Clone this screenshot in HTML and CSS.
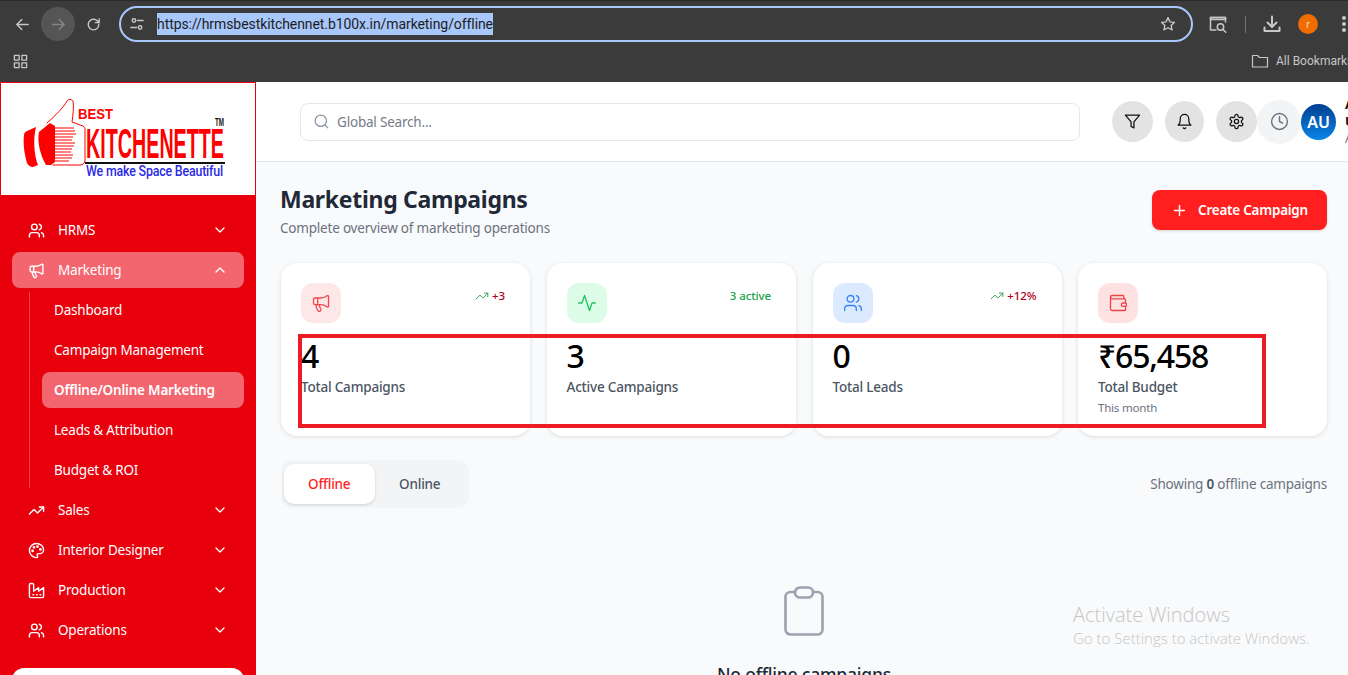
FILE: index.html
```html
<!DOCTYPE html>
<html lang="en">
<head>
    <meta charset="UTF-8">
    <meta name="viewport" content="width=device-width, initial-scale=1.0">
    <title>Marketing Campaigns</title>
    <link rel="stylesheet" href="styles.css">
</head>
<body>
    <svg class="sprites" aria-hidden="true">
        <symbol id="i-users" viewBox="0 0 24 24"><path d="M16 21v-2a4 4 0 0 0-4-4H6a4 4 0 0 0-4 4v2"/><circle cx="9" cy="7" r="4"/><path d="M22 21v-2a4 4 0 0 0-3-3.870"/><path d="M16 3.130a4 4 0 0 1 0 7.750"/></symbol>
        <symbol id="i-megaphone" viewBox="0 0 24 24"><path d="M11 6a13 13 0 0 0 8.400-2.800A1 1 0 0 1 21 4v12a1 1 0 0 1-1.600.8A13 13 0 0 0 11 14H5a2 2 0 0 1-2-2V8a2 2 0 0 1 2-2z"/><path d="M6 14a12 12 0 0 0 2.400 7.200 2 2 0 0 0 3.200-2.400A8 8 0 0 1 10 14"/><path d="M8 6v8"/></symbol>
        <symbol id="i-trend" viewBox="0 0 24 24"><polyline points="22 7 13.500 15.500 8.500 10.500 2 17"/><polyline points="16 7 22 7 22 13"/></symbol>
        <symbol id="i-palette" viewBox="0 0 24 24"><circle cx="13.500" cy="6.500" r="1"/><circle cx="17.500" cy="10.500" r="1"/><circle cx="8.500" cy="7.500" r="1"/><circle cx="6.500" cy="12.500" r="1"/><path d="M12 2C6.500 2 2 6.500 2 12s4.500 10 10 10c.926 0 1.648-.746 1.648-1.688 0-.437-.18-.835-.437-1.125-.29-.289-.438-.652-.438-1.125a1.640 1.640 0 0 1 1.668-1.668h1.996c3.051 0 5.555-2.503 5.555-5.554C21.965 6.012 17.461 2 12 2z"/></symbol>
        <symbol id="i-factory" viewBox="0 0 24 24"><path d="M2 20a2 2 0 0 0 2 2h16a2 2 0 0 0 2-2V8l-7 5V8l-7 5V4a2 2 0 0 0-2-2H4a2 2 0 0 0-2 2Z"/><path d="M17 18h1"/><path d="M12 18h1"/><path d="M7 18h1"/></symbol>
        <symbol id="i-down" viewBox="0 0 24 24"><path d="m6 9 6 6 6-6"/></symbol>
        <symbol id="i-up" viewBox="0 0 24 24"><path d="m18 15-6-6-6 6"/></symbol>
    </svg>

    <header class="browser">
        <div class="toolbar">
            <svg class="tool back" viewBox="0 0 24 24"><path d="M20 12H5m6-7-7 7 7 7"/></svg>
            <span class="fwd-wrap"><svg class="tool fwd" viewBox="0 0 24 24"><path d="M4 12h15m-6-7 7 7-7 7"/></svg></span>
            <svg class="tool reload" viewBox="0 0 24 24"><path d="M19.500 12a7.500 7.500 0 1 1-2.200-5.300L20 9.400M20 4v5.400h-5.400"/></svg>
            <div class="omnibox">
                <svg class="tune" viewBox="0 0 16 16"><circle cx="4.500" cy="4" r="2"/><path d="M8.500 4H15M1 12h6.500"/><circle cx="11.500" cy="12" r="2"/></svg>
                <span class="url">https://hrmsbestkitchennet.b100x.in/marketing/offline</span>
                <svg class="star" viewBox="0 0 24 24"><path d="m12 3.500 2.600 5.600 6.100.7-4.500 4.200 1.200 6L12 17l-5.400 3 1.200-6-4.500-4.200 6.100-.7z"/></svg>
            </div>
            <svg class="tool lens" viewBox="0 0 20 20"><path d="M8 16H2.500V3.500h15V8"/><path d="M2.500 3.500h15v2h-15z"/><circle cx="12.500" cy="13" r="3.200"/><path d="m15 15.500 2.800 2.800"/></svg>
            <span class="divider"></span>
            <svg class="tool save" viewBox="0 0 20 20"><path d="M10 2.500v10M5.500 8.500l4.500 4.500 4.500-4.500M2.500 13.500v3.500h15v-3.500"/></svg>
            <span class="profile">r</span>
            <span class="kebab"></span>
        </div>
        <div class="bookmarks">
            <svg class="apps" viewBox="0 0 16 16"><rect x="1.500" y="1.500" width="5" height="5"/><rect x="9.500" y="1.500" width="5" height="5"/><rect x="1.500" y="9.500" width="5" height="5"/><rect x="9.500" y="9.500" width="5" height="5"/></svg>
            <span class="divider short"></span>
            <svg class="folder" viewBox="0 0 18 16"><path d="M1.500 2.500h5l2 2h8v9.500h-15z"/></svg>
            <span class="all-marks">All Bookmarks</span>
        </div>
    </header>

    <div class="app">
        <aside class="sidebar">
            <div class="logo">
                <svg class="logo-art" viewBox="0 0 226 113">
                    <path class="thumb-line" d="M47 41C56 33 63 26 67 19c1-2 5-2 6 0 1 6 0 14-1 21l11 4c2 1 2 2 2 4v30c0 3-2 5-5 5H53"/>
                    <path class="thumb-fill" d="M39 50l11-9 5 3v36l-4 3h-5c-6-10-9-24-7-33z"/>
                    <path class="thumb-fill" d="M27 49l9-4c-3 12-2 28 2 38l-5 2c-3 0-5-2-6-4-3-10-4-20-3-28 0-2 1-3 3-4z"/>
                    <path class="thumb-lines" d="M55 46h19M55 49h20M55 52h21M55 55h18M55 58h17M55 61h20M55 64h19M55 67h17M55 70h16M55 73h18M55 76h17M55 79h14"/>
                    <text class="logo-best" x="78" y="37" textLength="35" lengthAdjust="spacingAndGlyphs">BEST</text>
                    <text class="logo-name" x="86" y="76" textLength="138" lengthAdjust="spacingAndGlyphs">KITCHENETTE</text>
                    <text class="logo-tm" x="215" y="44" textLength="9" lengthAdjust="spacingAndGlyphs">TM</text>
                    <rect class="logo-rule" x="85" y="80" width="140" height="2"/>
                    <text class="logo-tag" x="86" y="94" textLength="137" lengthAdjust="spacingAndGlyphs">We make Space Beautiful</text>
                </svg>
            </div>
            <nav class="nav">
                <a class="nav-item"><svg class="ico"><use href="#i-users"/></svg><span>HRMS</span><svg class="chev"><use href="#i-down"/></svg></a>
                <a class="nav-item open"><svg class="ico"><use href="#i-megaphone"/></svg><span>Marketing</span><svg class="chev"><use href="#i-up"/></svg></a>
                <div class="subnav">
                    <a class="sub-item">Dashboard</a>
                    <a class="sub-item">Campaign Management</a>
                    <a class="sub-item active">Offline/Online Marketing</a>
                    <a class="sub-item">Leads &amp; Attribution</a>
                    <a class="sub-item">Budget &amp; ROI</a>
                </div>
                <a class="nav-item"><svg class="ico"><use href="#i-trend"/></svg><span>Sales</span><svg class="chev"><use href="#i-down"/></svg></a>
                <a class="nav-item"><svg class="ico"><use href="#i-palette"/></svg><span>Interior Designer</span><svg class="chev"><use href="#i-down"/></svg></a>
                <a class="nav-item"><svg class="ico"><use href="#i-factory"/></svg><span>Production</span><svg class="chev"><use href="#i-down"/></svg></a>
                <a class="nav-item"><svg class="ico"><use href="#i-users"/></svg><span>Operations</span><svg class="chev"><use href="#i-down"/></svg></a>
            </nav>
            <div class="side-foot"></div>
        </aside>

        <div class="content">
            <div class="topbar">
                <div class="search">
                    <svg class="search-ico" viewBox="0 0 24 24"><circle cx="11" cy="11" r="8"/><path d="m21 21-4.300-4.300"/></svg>
                    <span>Global Search...</span>
                </div>
                <div class="top-actions">
                    <span class="round filter"><svg viewBox="0 0 24 24"><polygon points="22 3 2 3 10 12.460 10 19 14 21 14 12.460 22 3"/></svg></span>
                    <span class="round bell"><svg viewBox="0 0 24 24"><path d="M6 8a6 6 0 0 1 12 0c0 7 3 9 3 9H3s3-2 3-9"/><path d="M10.300 21a1.940 1.940 0 0 0 3.400 0"/></svg></span>
                    <span class="round gear"><svg viewBox="0 0 24 24"><path d="M12.220 2h-.44a2 2 0 0 0-2 2v.18a2 2 0 0 1-1 1.730l-.43.25a2 2 0 0 1-2 0l-.15-.08a2 2 0 0 0-2.730.730l-.22.38a2 2 0 0 0 .730 2.730l.15.1a2 2 0 0 1 1 1.720v.51a2 2 0 0 1-1 1.740l-.15.09a2 2 0 0 0-.730 2.730l.22.38a2 2 0 0 0 2.730.730l.15-.08a2 2 0 0 1 2 0l.43.25a2 2 0 0 1 1 1.730V20a2 2 0 0 0 2 2h.44a2 2 0 0 0 2-2v-.18a2 2 0 0 1 1-1.730l.43-.25a2 2 0 0 1 2 0l.15.08a2 2 0 0 0 2.730-.730l.22-.39a2 2 0 0 0-.730-2.730l-.15-.08a2 2 0 0 1-1-1.740v-.5a2 2 0 0 1 1-1.740l.15-.09a2 2 0 0 0 .730-2.730l-.22-.38a2 2 0 0 0-2.730-.730l-.15.08a2 2 0 0 1-2 0l-.43-.25a2 2 0 0 1-1-1.730V4a2 2 0 0 0-2-2z"/><circle cx="12" cy="12" r="3"/></svg></span>
                    <span class="round clock"><svg viewBox="0 0 24 24"><circle cx="12" cy="12" r="10"/><polyline points="12 6 12 12 16 14"/></svg></span>
                    <span class="avatar">AU</span>
                    <div class="who">
                        <b>Admin</b>
                        <b>User</b>
                        <small>Admin</small>
                    </div>
                </div>
            </div>

            <main class="page">
                <div class="page-head">
                    <div>
                        <h1>Marketing Campaigns</h1>
                        <p>Complete overview of marketing operations</p>
                    </div>
                    <button class="create"><svg viewBox="0 0 24 24"><path d="M5 12h14M12 5v14"/></svg>Create Campaign</button>
                </div>

                <section class="cards">
                    <article class="card">
                        <div class="card-top">
                            <span class="card-ico rose"><svg class="ico"><use href="#i-megaphone"/></svg></span>
                            <span class="trend"><svg><use href="#i-trend"/></svg><em>+3</em></span>
                        </div>
                        <div class="value">4</div>
                        <div class="label">Total Campaigns</div>
                    </article>
                    <article class="card">
                        <div class="card-top">
                            <span class="card-ico green"><svg viewBox="0 0 24 24"><path d="M22 12h-4l-3 9L9 3l-3 9H2"/></svg></span>
                            <span class="trend on">3 active</span>
                        </div>
                        <div class="value">3</div>
                        <div class="label">Active Campaigns</div>
                    </article>
                    <article class="card">
                        <div class="card-top">
                            <span class="card-ico blue"><svg class="ico"><use href="#i-users"/></svg></span>
                            <span class="trend"><svg><use href="#i-trend"/></svg><em>+12%</em></span>
                        </div>
                        <div class="value">0</div>
                        <div class="label">Total Leads</div>
                    </article>
                    <article class="card">
                        <div class="card-top">
                            <span class="card-ico red"><svg viewBox="0 0 24 24"><path d="M19 7V4a1 1 0 0 0-1-1H5a2 2 0 0 0 0 4h15a1 1 0 0 1 1 1v4h-3a2 2 0 0 0 0 4h3a1 1 0 0 0 1-1v-2a1 1 0 0 0-1-1"/><path d="M3 5v14a2 2 0 0 0 2 2h15a1 1 0 0 0 1-1v-4"/></svg></span>
                        </div>
                        <div class="value">₹65,458</div>
                        <div class="label">Total Budget</div>
                        <div class="note">This month</div>
                    </article>
                </section>

                <div class="tab-row">
                    <div class="tabs">
                        <button class="tab current">Offline</button>
                        <button class="tab">Online</button>
                    </div>
                    <p class="showing">Showing <b>0</b> offline campaigns</p>
                </div>

                <div class="empty">
                    <svg viewBox="0 0 40 50"><rect x="1.500" y="6" width="37" height="42.500" rx="5"/><rect x="11" y="1.500" width="18" height="10" rx="5" class="clip"/></svg>
                    <h3>No offline campaigns</h3>
                </div>
            </main>
        </div>
    </div>

    <!-- marker drawn on the screenshot -->
    <div class="marker"></div>
    <div class="activate">
        <p>Activate Windows</p>
        <small>Go to Settings to activate Windows.</small>
    </div>
</body>
</html>
```

FILE: styles.css
```css
*{
    box-sizing: border-box;
}
html,body{
    height: 100%;
    overflow: hidden;
}
body{
    margin: 0;
    font-family: "Noto Sans", "Open Sans", sans-serif;
    font-size: 13.5px;
    letter-spacing: -0.2px;
    color: #1f2937;
    background-color: #f9fafb;
}
.sprites{
    display: none;
}
svg{
    fill: none;
    stroke: currentColor;
    stroke-width: 2;
    stroke-linecap: round;
    stroke-linejoin: round;
    flex-shrink: 0;
}

/* browser chrome */
.browser{
    height: 82px;
    background-color: #3b3b3b;
    color: #c7c7c7;
    letter-spacing: 0;
}
.toolbar{
    height: 46px;
    display: flex;
    align-items: center;
    padding: 1px 0 0 14px;
    white-space: nowrap;
    border-top: 1px solid #2a2a2a;
}
.tool{
    width: 17px;
    height: 17px;
}
.fwd-wrap{
    width: 34px;
    height: 34px;
    margin-left: 10px;
    border-radius: 50%;
    background-color: #555;
    display: flex;
    align-items: center;
    justify-content: center;
    color: #858585;
}
.reload{
    margin-left: 10px;
}
.omnibox{
    width: 1074px;
    height: 36px;
    margin-left: 17px;
    border: 2px solid #a8c7fa;
    border-radius: 18px;
    display: flex;
    align-items: center;
    padding: 0 14px 0 9px;
}
.tune{
    width: 14px;
    height: 14px;
    stroke-width: 1.6;
}
.url{
    margin-left: 13px;
    font-family: "Roboto", sans-serif;
    font-size: 14px;
    letter-spacing: -0.08px;
    line-height: 22px;
    background-color: #a8c7fa;
    color: #1d1d1d;
}
.star{
    width: 18px;
    height: 18px;
    margin-left: auto;
    stroke-width: 1.8;
}
.lens{
    margin-left: 15px;
    width: 20px;
    height: 20px;
    stroke-width: 1.5;
}
.divider{
    width: 1px;
    height: 17px;
    margin-left: 17px;
    background-color: #6f6f6f;
}
.save{
    width: 20px;
    height: 20px;
    margin-left: 16px;
}
.profile{
    width: 20px;
    height: 20px;
    margin-left: 16px;
    border-radius: 50%;
    background-color: #ee6c00;
    color: #f5d6b8;
    font-size: 10px;
    line-height: 20px;
    text-align: center;
}
.kebab{
    width: 4px;
    height: 4px;
    margin-left: 24px;
    border-radius: 50%;
    background-color: #c7c7c7;
    box-shadow: 0 -6px #c7c7c7, 0 6px #c7c7c7;
}
.bookmarks{
    height: 35px;
    display: flex;
    align-items: center;
    padding: 0 0 5px 13px;
    white-space: nowrap;
}
.apps{
    width: 15px;
    height: 15px;
    stroke-width: 1.4;
    stroke-linecap: butt;
}
.divider.short{
    height: 16px;
    margin-left: 1207px;
}
.folder{
    width: 18px;
    height: 16px;
    margin-left: 16px;
    stroke-width: 1.2;
}
.all-marks{
    margin-left: 7px;
    font-family: "Roboto", sans-serif;
    font-size: 12px;
}

/* app shell */
.app{
    display: flex;
    height: 593px;
}
.sidebar{
    width: 256px;
    flex-shrink: 0;
    background-color: #e8000d;
    overflow: hidden;
}
.logo{
    height: 113px;
    background-color: #fff;
    border: 1px solid #e8000d;
    border-bottom: none;
}
.logo-art{
    display: block;
    width: 226px;
    height: 113px;
    margin-left: -1px;
    margin-top: -1px;
    stroke: none;
}
.thumb-line{
    fill: none;
    stroke: #f00;
    stroke-width: 1;
}
.thumb-fill{
    fill: #f00;
}
.thumb-lines{
    fill: none;
    stroke: #f00;
    stroke-width: 1.1;
    stroke-linecap: butt;
}
.logo-best,.logo-name,.logo-tm{
    font-family: "Liberation Sans", sans-serif;
    font-weight: 700;
    letter-spacing: 0;
}
.logo-best{
    font-size: 15px;
    fill: #f00;
}
.logo-name{
    font-size: 43px;
    fill: #f00;
}
.logo-tm{
    font-size: 10px;
    fill: #111;
}
.logo-rule{
    fill: #111;
}
.logo-tag{
    font-family: "Roboto", sans-serif;
    font-size: 14px;
    font-weight: 500;
    fill: #2a2ae6;
}
.nav{
    display: flex;
    flex-direction: column;
    gap: 4px;
    padding: 17px 12px 0;
    color: #fff;
}
.nav-item{
    height: 36px;
    display: flex;
    align-items: center;
    gap: 13px;
    padding: 0 16px;
    border-radius: 8px;
}
.nav-item .ico{
    width: 17px;
    height: 17px;
}
.nav-item.open{
    background-color: #f3666f;
}
.chev{
    width: 16px;
    height: 16px;
    margin-left: auto;
}
.subnav{
    display: flex;
    flex-direction: column;
    gap: 4px;
    margin-left: 17px;
    padding-left: 12px;
    border-left: 1px solid #f3444e;
}
.sub-item{
    height: 36px;
    display: flex;
    align-items: center;
    padding: 0 12px;
    border-radius: 8px;
}
.sub-item.active{
    background-color: #f3666f;
    font-weight: 600;
}
.side-foot{
    height: 40px;
    margin: 20px 12px 0;
    background-color: #fff;
    border-radius: 12px;
}

/* header */
.content{
    flex: 1;
    min-width: 0;
}
.topbar{
    height: 80px;
    background-color: #fff;
    border-bottom: 1px solid #e5e7eb;
    display: flex;
    align-items: center;
    padding-left: 44px;
    white-space: nowrap;
}
.search{
    width: 780px;
    flex-shrink: 0;
    height: 38px;
    border: 1px solid #e5e7eb;
    border-radius: 8px;
    display: flex;
    align-items: center;
    gap: 7px;
    padding-left: 12px;
    color: #757c88;
}
.search-ico{
    width: 17px;
    height: 17px;
    color: #8b95a5;
    stroke-width: 1.8;
}
.top-actions{
    display: flex;
    align-items: center;
    flex-shrink: 0;
    margin-left: 32px;
}
.round{
    height: 41px;
    width: 41px;
    border-radius: 50%;
    background-color: #e3e3e3;
    color: #111;
    display: flex;
    align-items: center;
    justify-content: center;
}
.round svg{
    width: 17px;
    height: 17px;
    stroke-width: 1.8;
}
.bell{
    width: 39px;
    margin-left: 12px;
}
.gear{
    margin-left: 12px;
}
.clock{
    width: 44px;
    height: 44px;
    background-color: #f3f4f6;
    color: #6b7280;
}
.clock svg{
    width: 19px;
    height: 19px;
}
.avatar{
    width: 35px;
    height: 36px;
    border-radius: 50%;
    background: linear-gradient(180deg, #003f8f, #0a84e8);
    color: #fff;
    font-size: 16px;
    font-weight: 600;
    text-align: center;
    line-height: 36px;
}
.who{
    margin-left: 9px;
    display: flex;
    flex-direction: column;
    font-size: 13px;
    line-height: 17px;
    color: #111;
}
.who small{
    font-size: 12px;
    color: #6b7280;
}

/* page */
.page{
    padding: 22px 21px 0 25px;
}
.page-head{
    display: flex;
    justify-content: space-between;
    align-items: center;
}
h1{
    margin: -1px 0 0 -1px;
    font-size: 23px;
    letter-spacing: -0.3px;
    line-height: 32px;
    font-weight: 700;
    color: #1f2937;
}
.page-head p{
    margin: 3px 0 0 -1px;
    line-height: 20px;
    color: #6b7280;
}
.create{
    height: 40px;
    width: 175px;
    margin-bottom: 2px;
    border: none;
    border-radius: 8px;
    background-color: #ff1f1f;
    color: #fff;
    font: 600 13.5px "Noto Sans", sans-serif;
    letter-spacing: -0.25px;
    display: flex;
    align-items: center;
    justify-content: center;
    gap: 10px;
    box-shadow: 0 1px 3px rgba(0, 0, 0, 0.15);
}
.create svg{
    width: 17px;
    height: 17px;
}
.cards{
    display: grid;
    grid-template-columns: 249px 249.5px 249px 249px;
    gap: 16.5px;
    margin-top: 25px;
}
.card{
    height: 173px;
    padding: 20px;
    background-color: #fff;
    border-radius: 16px;
    box-shadow: 0 1px 4px rgba(0, 0, 0, 0.12);
}
.card-top{
    display: flex;
    justify-content: space-between;
    align-items: flex-start;
    height: 40px;
}
.card-ico{
    width: 40px;
    height: 40px;
    border-radius: 12px;
    display: flex;
    align-items: center;
    justify-content: center;
}
.card-ico svg{
    width: 20px;
    height: 20px;
    stroke-width: 1.6;
}
.rose{
    background-color: #fde7e7;
    color: #f5474f;
}
.green{
    background-color: #dcfce7;
    color: #22c55e;
}
.blue{
    background-color: #dbeafe;
    color: #3b82f6;
}
.red{
    background-color: #fee2e2;
    color: #ef4444;
}
.trend{
    display: flex;
    align-items: center;
    gap: 3px;
    margin-right: 5px;
    font-size: 11.5px;
    letter-spacing: -0.1px;
    font-weight: 500;
    line-height: 26px;
    color: #22a04f;
}
.trend svg{
    width: 14px;
    height: 14px;
    stroke-width: 1.6;
}
.trend em{
    font-style: normal;
    color: #b00020;
}
.trend.on{
    color: #16a34a;
}
.value{
    margin-top: 13px;
    font-size: 32px;
    letter-spacing: -1.2px;
    line-height: 40px;
    font-weight: 500;
    color: #000;
}
.label{
    margin-top: 1px;
    line-height: 20px;
    font-weight: 500;
    color: #4b5563;
}
.note{
    margin-top: 2px;
    font-size: 11.5px;
    line-height: 18px;
    color: #6b7280;
}
.tab-row{
    display: flex;
    justify-content: space-between;
    align-items: center;
    margin-top: 24px;
}
.tabs{
    width: 188px;
    height: 48px;
    padding: 4px 4px 4px 3px;
    display: flex;
    background-color: #f3f4f6;
    border-radius: 12px;
}
.tab{
    flex: 1;
    border: none;
    border-radius: 10px;
    background: none;
    font: 500 13.5px "Noto Sans", sans-serif;
    letter-spacing: -0.2px;
    color: #4b5563;
}
.tab.current{
    background-color: #fff;
    color: #ff1f1f;
    box-shadow: 0 1px 3px rgba(0, 0, 0, 0.15);
}
.showing{
    margin: 0;
    color: #6b7280;
}
.showing b{
    font-weight: 600;
    color: #4b5563;
}
.empty{
    margin-top: 78px;
    display: flex;
    flex-direction: column;
    align-items: center;
}
.empty svg{
    width: 40px;
    height: 50px;
    color: #9ca3af;
    stroke-width: 2.600;
}
.clip{
    fill: #f9fafb;
}
.empty h3{
    margin: 24px 0 0;
    font-size: 17.5px;
    line-height: 28px;
    font-weight: 500;
    color: #1f2937;
}

/* overlays on top of the page */
.marker{
    position: absolute;
    left: 298px;
    top: 334px;
    width: 968px;
    height: 94px;
    border: 4px solid #ed1c24;
}
.activate{
    position: absolute;
    left: 1073px;
    top: 602px;
    color: #c6c6c6;
    font-family: "Open Sans", sans-serif;
    font-weight: 300;
    letter-spacing: 0;
}
.activate p{
    margin: 0;
    font-size: 20px;
    line-height: 26px;
}
.activate small{
    display: block;
    font-size: 15px;
    line-height: 20px;
}
```
